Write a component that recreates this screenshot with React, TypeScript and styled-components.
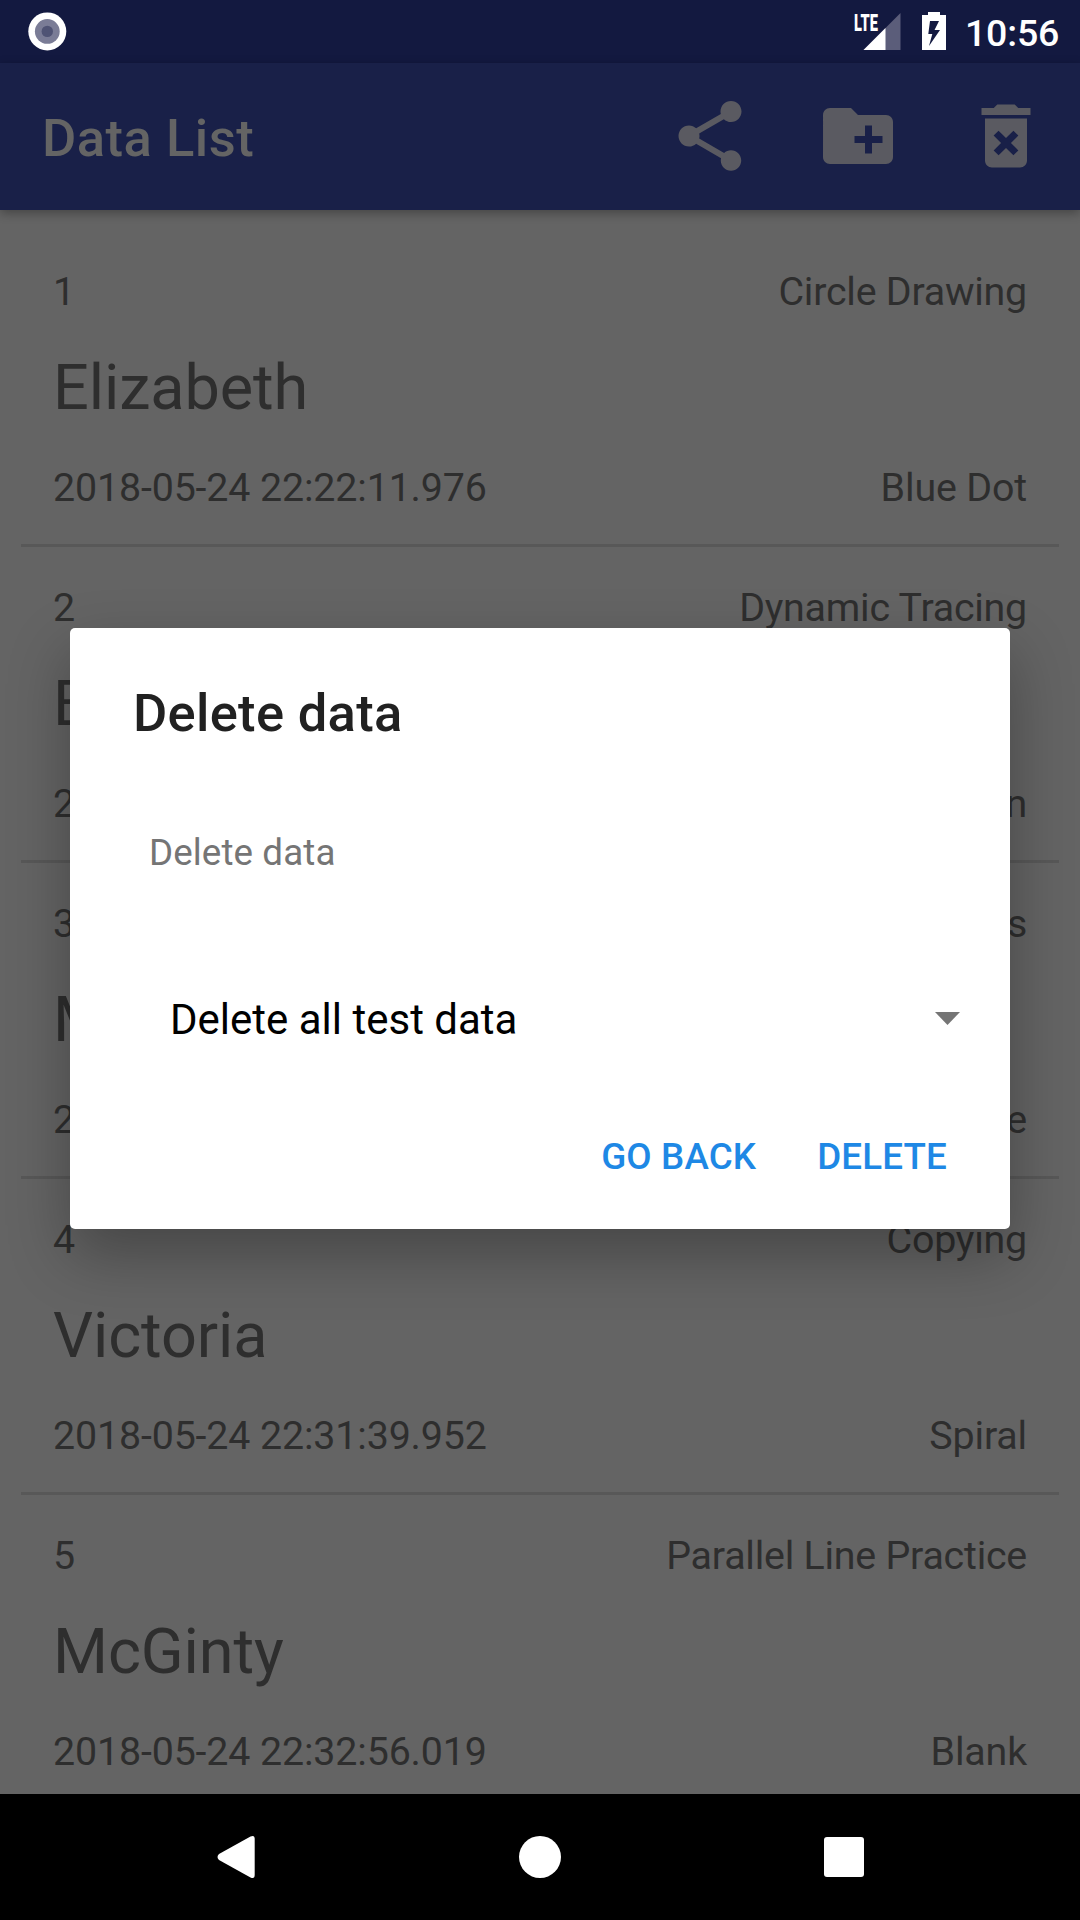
import React from "react";
import styled, { createGlobalStyle } from "styled-components";

const Global = createGlobalStyle`
  * { box-sizing: border-box; }
  body { margin: 0; background: #646464; font-family: Roboto, "Noto Sans", sans-serif; }
`;

const Screen = styled.div`
  position: relative;
  display: flex;
  flex-direction: column;
  width: 1080px;
  height: 1920px;
  overflow: hidden;
  background: #646464;
`;

const StatusBar = styled.header`
  display: flex;
  align-items: flex-start;
  justify-content: space-between;
  flex: none;
  height: 63px;
  padding: 12px 21px 0 28px;
  background: #131940;
`;

const StatusIcons = styled.div`
  display: flex;
  align-items: flex-start;
`;

const Signal = styled.div`
  display: flex;
  width: 47px;
  height: 38px;
  margin-right: 21px;
`;

const Network = styled.span`
  flex: none;
  width: 9px;
  height: 20px;
  overflow: visible;
  white-space: nowrap;
  color: #fff;
  font-size: 23.5px;
  font-weight: 900;
  line-height: 22px;
  transform: scaleX(0.62);
  transform-origin: left;
`;

const Clock = styled.span`
  width: 94px;
  margin-left: 19px;
  color: #fff;
  font-size: 37.5px;
  font-weight: 500;
  letter-spacing: -0.2px;
  line-height: 42px;
`;

const AppBar = styled.div`
  display: flex;
  align-items: center;
  flex: none;
  height: 147px;
  padding: 0 32px 0 42px;
  background: #192048;
  box-shadow: 0 3px 10px rgba(0, 0, 0, 0.32);
`;

const AppTitle = styled.h1`
  flex: 1;
  margin: 3px 0 0;
  color: #646464;
  font-size: 52.5px;
  font-weight: 500;
  letter-spacing: 0.5px;
  line-height: 62px;
`;

const Actions = styled.div`
  display: flex;
  gap: 64px;
  margin-bottom: 2px;
  color: #5a5a61;
`;

const ActionSvg = styled.svg`
  display: block;
  width: 84px;
  height: 84px;
  fill: currentColor;
`;

const List = styled.main`
  flex: 1;
  min-height: 0;
  overflow: hidden;
  padding: 21px 21px 0;
`;

const Entry = styled.section`
  display: flex;
  flex-direction: column;
  height: 316px;
  padding: 38px 32px 0;
  border-bottom: 3px solid #585858;
  color: #2e2e2e;
`;

const EntryLine = styled.div`
  display: flex;
  justify-content: space-between;
  font-size: 39.375px;
  line-height: 46px;
`;

const EntryText = styled.span<{ $tracking: number }>`
  letter-spacing: ${({ $tracking }) => $tracking}px;
`;

const EntryName = styled.div`
  margin: 36px 0 40px;
  font-size: 63px;
  line-height: 74px;
  letter-spacing: -0.1px;
`;

const NavBar = styled.nav`
  display: flex;
  justify-content: space-between;
  align-items: center;
  flex: none;
  height: 126px;
  padding: 0 216px;
  background: #000;
`;

const Dialog = styled.div`
  position: absolute;
  left: 70px;
  top: 628px;
  display: flex;
  flex-direction: column;
  width: 940px;
  height: 601px;
  padding: 54px 50px 0 63px;
  border-radius: 5px;
  background: #fff;
  box-shadow: 0 26px 62px rgba(0, 0, 0, 0.3);
`;

const DialogTitle = styled.h2`
  margin: 0;
  color: #212121;
  font-size: 52.5px;
  font-weight: 500;
  letter-spacing: 0.3px;
  line-height: 62px;
`;

const Message = styled.p`
  margin: 87px 0 0 16px;
  color: #757575;
  font-size: 36.75px;
  letter-spacing: 0.1px;
  line-height: 44px;
`;

const Select = styled.div`
  display: flex;
  align-items: flex-start;
  justify-content: space-between;
  margin-top: 120px;
  padding-left: 37px;
  color: #000;
  font-size: 42px;
  line-height: 50px;
`;

const Caret = styled.svg`
  margin-top: 17px;
`;

const Buttons = styled.div`
  display: flex;
  justify-content: flex-end;
  gap: 61px;
  margin: 90px 13px 0 0;
`;

const TextButton = styled.button`
  padding: 0;
  border: 0;
  background: none;
  color: #1e88e5;
  font-family: inherit;
  font-size: 36.75px;
  font-weight: 500;
  letter-spacing: 0.15px;
  line-height: 44px;
`;

const iconPaths = {
  share:
    "M18 16.08c-.76 0-1.44.3-1.96.77L8.91 12.7c.05-.23.09-.46.09-.7s-.04-.47-.09-.7l7.05-4.11c.54.5 1.25.81 2.04.81 1.66 0 3-1.34 3-3s-1.34-3-3-3-3 1.34-3 3c0 .24.04.47.09.7L8.04 9.81C7.5 9.31 6.79 9 6 9c-1.66 0-3 1.34-3 3s1.34 3 3 3c.79 0 1.5-.31 2.04-.81l7.12 4.16c-.05.21-.08.43-.08.65 0 1.61 1.31 2.92 2.92 2.92 1.61 0 2.92-1.31 2.92-2.92s-1.31-2.92-2.92-2.92z",
  newFolder:
    "M20 6h-8l-2-2H4c-1.11 0-1.99.89-1.99 2L2 18c0 1.11.89 2 2 2h16c1.11 0 2-.89 2-2V8c0-1.11-.89-2-2-2zm-1 8h-3v3h-2v-3h-3v-2h3V9h2v3h3v2z",
  deleteForever:
    "M6 19c0 1.1.9 2 2 2h8c1.1 0 2-.9 2-2V7H6v12zm2.46-7.12l1.41-1.41L12 12.59l2.12-2.12 1.41 1.41L13.41 14l2.12 2.12-1.41 1.41L12 15.41l-2.12 2.12-1.41-1.41L10.59 14l-2.13-2.12zM15.5 4l-1-1h-5l-1 1H5v2h14V4z",
};

const ActionIcon = ({ name }: { name: keyof typeof iconPaths }) => (
  <ActionSvg viewBox="0 0 24 24">
    <path d={iconPaths[name]} />
  </ActionSvg>
);

const entries = [
  { name: "Elizabeth", test: "Circle Drawing", date: "2018-05-24 22:22:11.976", kind: "Blue Dot" },
  { name: "Elizabeth", test: "Dynamic Tracing", date: "2018-05-24 22:24:35.412", kind: "Pattern" },
  { name: "McGinty", test: "Parallel Lines", date: "2018-05-24 22:28:04.630", kind: "Practice" },
  { name: "Victoria", test: "Copying", date: "2018-05-24 22:31:39.952", kind: "Spiral" },
  { name: "McGinty", test: "Parallel Line Practice", date: "2018-05-24 22:32:56.019", kind: "Blank" },
];

export default function App() {
  return (
    <>
      <Global />
      <Screen>
        <StatusBar>
          <svg width="39" height="39" viewBox="0 0 39 39">
            <circle cx="19.3" cy="19.4" r="19" fill="#fff" />
            <circle cx="19.3" cy="19.4" r="12.4" fill="#7a7c96" />
            <circle cx="19.3" cy="19.4" r="5.7" fill="#4f5374" />
          </svg>
          <StatusIcons>
            <Signal>
              <Network>LTE</Network>
              <svg width="38" height="38" viewBox="0 0 38 38">
                <path d="M37.5 1V38H0.5Z" fill="#5b5d7a" />
                <path d="M22.5 16V38H0.5Z" fill="#fff" />
              </svg>
            </Signal>
            <svg width="24" height="38" viewBox="0 0 24 38">
              <path
                fillRule="evenodd"
                fill="#fff"
                d="M6 0H18V3H24V38H0V3H6ZM8 9L6.3 22H10.3L7 34L18 18H12.5L17 9Z"
              />
            </svg>
            <Clock>10:56</Clock>
          </StatusIcons>
        </StatusBar>
        <AppBar>
          <AppTitle>Data List</AppTitle>
          <Actions>
            <ActionIcon name="share" />
            <ActionIcon name="newFolder" />
            <ActionIcon name="deleteForever" />
          </Actions>
        </AppBar>
        <List>
          {entries.map((entry, i) => (
            <Entry key={i}>
              <EntryLine>
                <EntryText $tracking={0}>{i + 1}</EntryText>
                <EntryText $tracking={-0.23}>{entry.test}</EntryText>
              </EntryLine>
              <EntryName>{entry.name}</EntryName>
              <EntryLine>
                <EntryText $tracking={-0.14}>{entry.date}</EntryText>
                <EntryText $tracking={-0.15}>{entry.kind}</EntryText>
              </EntryLine>
            </Entry>
          ))}
        </List>
        <NavBar>
          <svg width="40" height="44" viewBox="0 0 40 44">
            <path d="M34.5 1.6Q38.7 -0.2 38.7 4V40Q38.7 44.2 34.5 42.4L3 25Q0 22 3 19Z" fill="#fff" />
          </svg>
          <svg width="42" height="42" viewBox="0 0 42 42">
            <circle cx="21" cy="21" r="21" fill="#fff" />
          </svg>
          <svg width="40" height="40" viewBox="0 0 40 40">
            <rect width="40" height="40" rx="3" fill="#fff" />
          </svg>
        </NavBar>
        <Dialog>
          <DialogTitle>Delete data</DialogTitle>
          <Message>Delete data</Message>
          <Select>
            <span>Delete all test data</span>
            <Caret width="25" height="13" viewBox="0 0 25 13">
              <path d="M0 0H25L12.5 13Z" fill="#757575" />
            </Caret>
          </Select>
          <Buttons>
            <TextButton>GO BACK</TextButton>
            <TextButton>DELETE</TextButton>
          </Buttons>
        </Dialog>
      </Screen>
    </>
  );
}
